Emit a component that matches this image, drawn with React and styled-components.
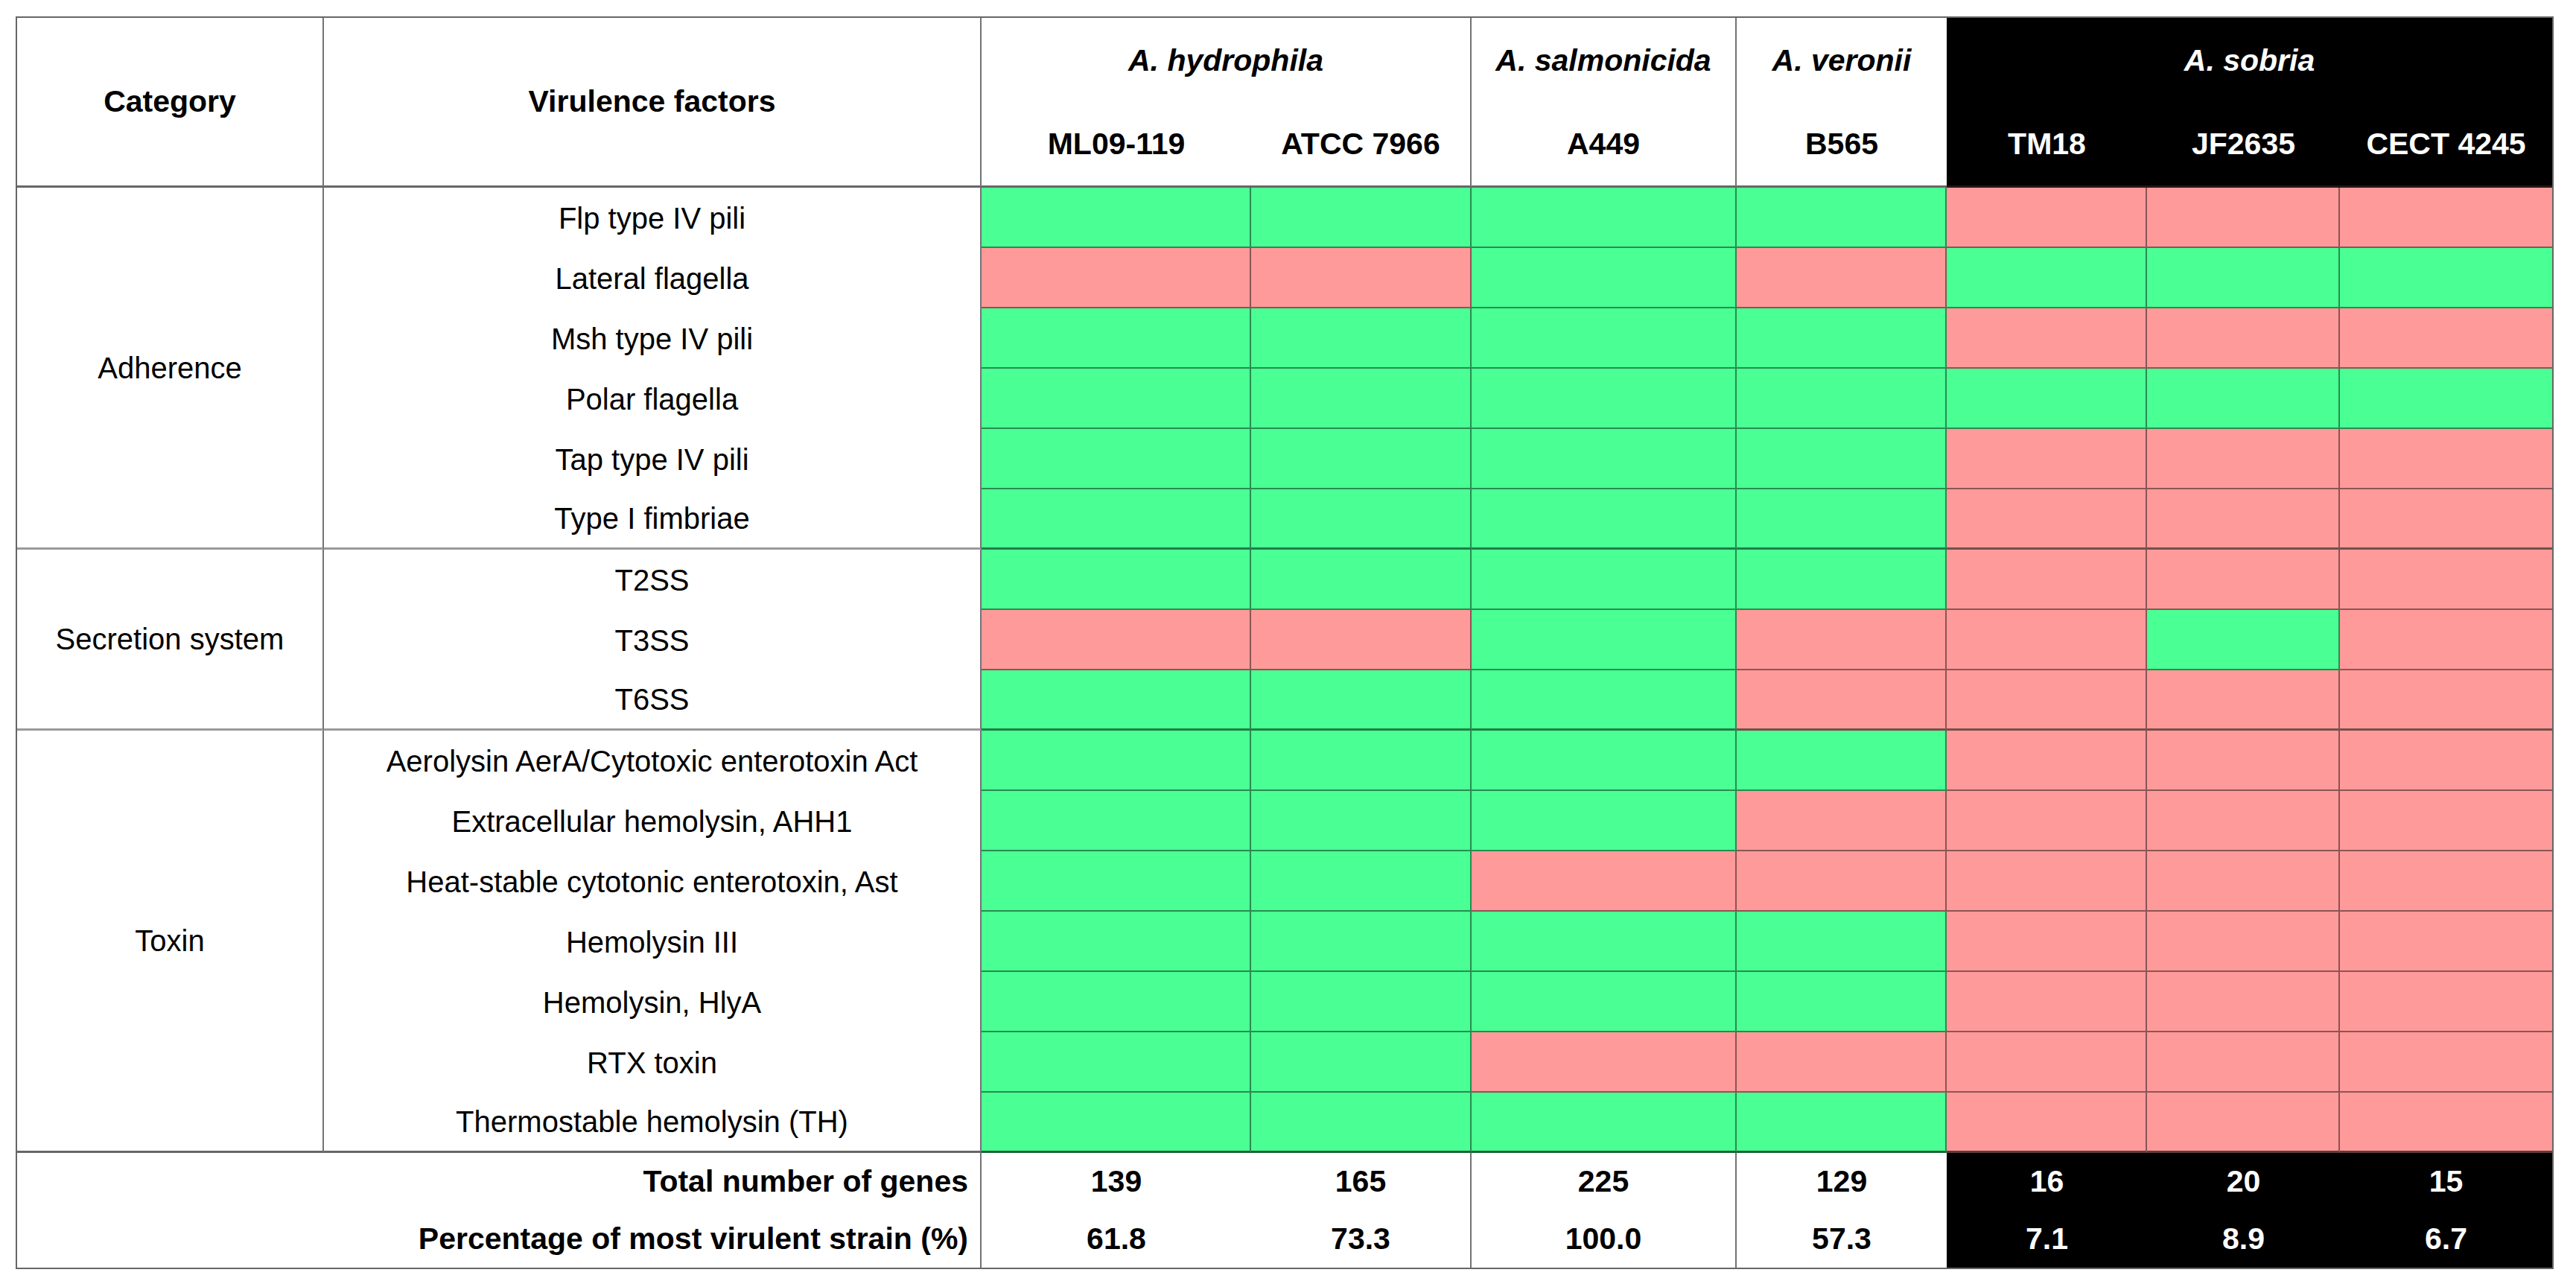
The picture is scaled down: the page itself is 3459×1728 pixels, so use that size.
import React from 'react';
import styled, { createGlobalStyle, css } from 'styled-components';

const GlobalStyle = createGlobalStyle`
  html, body { margin: 0; padding: 0; background: #ffffff; }
  body { font-family: "Liberation Sans", Arial, Helvetica, sans-serif; color: #000; }
`;

const COLS = [412, 883, 362, 296, 356, 282, 269, 259, 285];

const GRID_LINE = '#737373';
const GROUP_LINE = '#9a9a9a';
const FOOT_LINE = '#666666';
const MARK_LINE = 'rgba(0, 0, 0, 0.45)';
const MARK_GROUP_LINE = 'rgba(0, 20, 10, 0.55)';
const MARK_FOOT_LINE = 'rgba(0, 0, 0, 0.62)';

const Page = styled.div`
  padding: 22px 0 0 21px;
`;

const Grid = styled.div`
  display: grid;
  width: max-content;
  grid-template-columns: ${COLS.map((c) => `${c}px`).join(' ')};
  grid-template-rows: 114px 114px repeat(16, 81px) 77px 77px;
  border: 2px solid #666666;
`;

const Cell = styled.div`
  box-sizing: border-box;
  display: flex;
  align-items: center;
  justify-content: center;
  white-space: nowrap;
  line-height: 1;
  font-size: 40px;
`;

const HeadCell = styled(Cell)`
  font-size: 41px;
  font-weight: 700;
  grid-column: span ${(p) => p.$span || 1};
  grid-row: span ${(p) => p.$rows || 1};
  background: ${(p) => (p.$dark ? '#000' : '#fff')};
  color: ${(p) => (p.$dark ? '#fff' : '#000')};
  font-style: ${(p) => (p.$species ? 'italic' : 'normal')};
  border-right: ${(p) => (p.$divider ? `2px solid ${GRID_LINE}` : 'none')};
  ${(p) =>
    p.$bottom &&
    css`
      border-bottom: 3px solid ${p.$dark ? '#2a1515' : '#666666'};
    `}
`;

const edgeFor = (edge, kind) => {
  if (kind === 'white') {
    if (edge === 'group') return `3px solid ${GROUP_LINE}`;
    if (edge === 'foot') return `3px solid ${FOOT_LINE}`;
    return 'none';
  }
  if (edge === 'group') return `3px solid ${MARK_GROUP_LINE}`;
  if (edge === 'foot') return `3px solid ${MARK_FOOT_LINE}`;
  return `2px solid ${MARK_LINE}`;
};

const CategoryCell = styled(Cell)`
  grid-row: span ${(p) => p.$rows};
  border-right: 2px solid ${GRID_LINE};
  border-bottom: ${(p) => edgeFor(p.$edge, 'white')};
`;

const FactorCell = styled(Cell)`
  border-right: 2px solid ${GRID_LINE};
  border-bottom: ${(p) => edgeFor(p.$edge, 'white')};
`;

const MarkCell = styled.div`
  box-sizing: border-box;
  background: ${(p) => (p.$present ? '#4aff94' : '#ff9a9a')};
  border-right: ${(p) => (p.$lastCol ? 'none' : `2px solid ${MARK_LINE}`)};
  border-bottom: ${(p) => edgeFor(p.$edge, 'mark')};
`;

const FooterLabel = styled(Cell)`
  grid-column: span 2;
  justify-content: flex-end;
  padding-right: 16px;
  font-size: 41px;
  font-weight: 700;
  border-right: 2px solid ${GRID_LINE};
`;

const FooterValue = styled(Cell)`
  font-size: 41px;
  font-weight: 700;
  background: ${(p) => (p.$dark ? '#000' : '#fff')};
  color: ${(p) => (p.$dark ? '#fff' : '#000')};
  border-right: ${(p) => (p.$divider ? `2px solid ${GRID_LINE}` : 'none')};
`;

const SPECIES = [
  { name: 'A. hydrophila', span: 2, divider: true },
  { name: 'A. salmonicida', span: 1, divider: true },
  { name: 'A. veronii', span: 1, divider: false },
  { name: 'A. sobria', span: 3, divider: false, dark: true },
];

const STRAINS = [
  { name: 'ML09-119', divider: false },
  { name: 'ATCC 7966', divider: true },
  { name: 'A449', divider: true },
  { name: 'B565', divider: false },
  { name: 'TM18', dark: true },
  { name: 'JF2635', dark: true },
  { name: 'CECT 4245', dark: true },
];

const GROUPS = [
  {
    name: 'Adherence',
    rows: [
      ['Flp type IV pili', 'GGGGPPP'],
      ['Lateral flagella', 'PPGPGGG'],
      ['Msh type IV pili', 'GGGGPPP'],
      ['Polar flagella', 'GGGGGGG'],
      ['Tap type IV pili', 'GGGGPPP'],
      ['Type I fimbriae', 'GGGGPPP'],
    ],
  },
  {
    name: 'Secretion system',
    rows: [
      ['T2SS', 'GGGGPPP'],
      ['T3SS', 'PPGPPGP'],
      ['T6SS', 'GGGPPPP'],
    ],
  },
  {
    name: 'Toxin',
    rows: [
      ['Aerolysin AerA/Cytotoxic enterotoxin Act', 'GGGGPPP'],
      ['Extracellular hemolysin, AHH1', 'GGGPPPP'],
      ['Heat-stable cytotonic enterotoxin, Ast', 'GGPPPPP'],
      ['Hemolysin III', 'GGGGPPP'],
      ['Hemolysin, HlyA', 'GGGGPPP'],
      ['RTX toxin', 'GGPPPPP'],
      ['Thermostable hemolysin (TH)', 'GGGGPPP'],
    ],
  },
];

const FOOTER = [
  { label: 'Total number of genes', values: ['139', '165', '225', '129', '16', '20', '15'] },
  { label: 'Percentage of most virulent strain (%)', values: ['61.8', '73.3', '100.0', '57.3', '7.1', '8.9', '6.7'] },
];

export default function App() {
  return (
    <Page>
      <GlobalStyle />
      <Grid>
        <HeadCell $rows={2} $divider $bottom>Category</HeadCell>
        <HeadCell $rows={2} $divider $bottom>Virulence factors</HeadCell>
        {SPECIES.map((s) => (
          <HeadCell key={s.name} $span={s.span} $species $divider={s.divider} $dark={s.dark}>
            {s.name}
          </HeadCell>
        ))}
        {STRAINS.map((s) => (
          <HeadCell key={s.name} $divider={s.divider} $dark={s.dark} $bottom>
            {s.name}
          </HeadCell>
        ))}

        {GROUPS.map((g, gi) => {
          const lastGroup = gi === GROUPS.length - 1;
          const groupEdge = lastGroup ? 'foot' : 'group';
          return (
            <React.Fragment key={g.name}>
              <CategoryCell $rows={g.rows.length} $edge={groupEdge}>
                {g.name}
              </CategoryCell>
              {g.rows.map(([factor, marks], ri) => {
                const edge = ri === g.rows.length - 1 ? groupEdge : 'row';
                return (
                  <React.Fragment key={factor}>
                    <FactorCell $edge={edge}>{factor}</FactorCell>
                    {marks.split('').map((m, mi) => (
                      <MarkCell
                        key={mi}
                        $present={m === 'G'}
                        $edge={edge}
                        $lastCol={mi === marks.length - 1}
                      />
                    ))}
                  </React.Fragment>
                );
              })}
            </React.Fragment>
          );
        })}

        {FOOTER.map((row) => (
          <React.Fragment key={row.label}>
            <FooterLabel>{row.label}</FooterLabel>
            {row.values.map((v, vi) => (
              <FooterValue
                key={vi}
                $dark={STRAINS[vi].dark}
                $divider={STRAINS[vi].divider}
              >
                {v}
              </FooterValue>
            ))}
          </React.Fragment>
        ))}
      </Grid>
    </Page>
  );
}
